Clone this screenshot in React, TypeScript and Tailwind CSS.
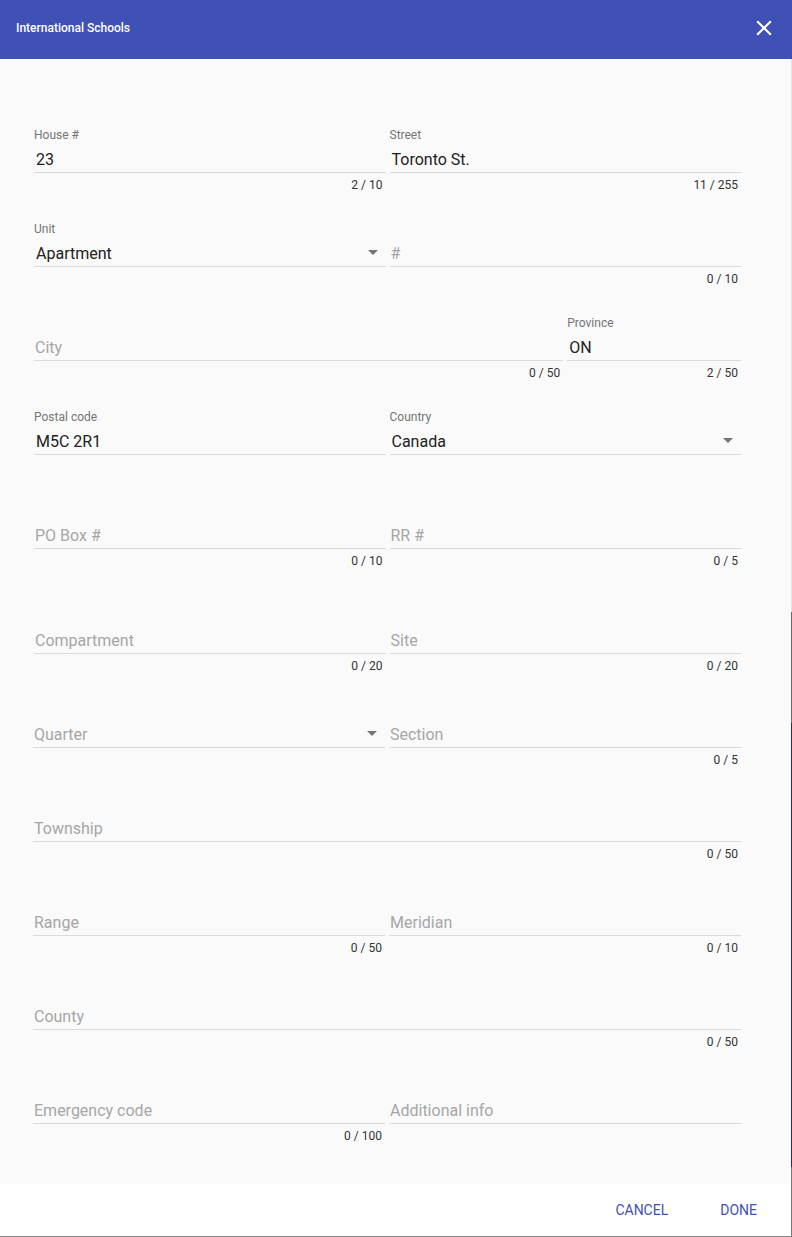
import React from "react";
import cn from "clsx";

interface FieldProps {
  label?: string;
  value?: string;
  placeholder?: string;
  counter?: string;
  select?: boolean;
  className?: string;
}

const fontStack = "font-['Roboto','Liberation_Sans',sans-serif]";

const DropArrow: React.FC = () => (
  <svg width="10" height="5" viewBox="0 0 10 5" className="mr-[8px] mb-[2px]">
    <polygon points="0,0 10,0 5,5" fill="#757575" />
  </svg>
);

const Field: React.FC<FieldProps> = ({
  label,
  value,
  placeholder,
  counter,
  select,
  className,
}) => (
  <div className={cn("flex flex-col", className)}>
    <div className="h-4 text-xs leading-4 text-[#757575]">{label}</div>
    <div
      className={cn(
        "flex h-[30px] items-center justify-between pt-[4px]",
        "border-b border-[#dadada]"
      )}
    >
      {value ? (
        <span className="pl-[2px] text-base text-[#212121]">{value}</span>
      ) : (
        <span className="pl-[1px] text-base text-[#a6a6a6]">{placeholder}</span>
      )}
      {select && <DropArrow />}
    </div>
    <div className="mt-[2px] h-5 pr-[3px] text-right text-xs leading-5 text-[#333]">
      {counter}
    </div>
  </div>
);

const rowCn = "grid grid-cols-2 gap-x-[4px]";

export default function App() {
  return (
    <div className={cn("flex w-[792px] bg-[#2a2f4a]", fontStack)}>
      <div className="flex w-[791px] flex-col">
        <header
          className={cn(
            "flex h-[59px] items-center justify-between",
            "bg-[#3f51b5] pb-[4px] pl-4 pr-[14px] text-white"
          )}
        >
          <span className="text-xs font-medium">International Schools</span>
          <svg width="26" height="26" viewBox="0 0 24 24" fill="white">
            <path d="M19 6.41L17.59 5 12 10.59 6.41 5 5 6.41 10.59 12 5 17.59 6.41 19 12 13.41 17.59 19 19 17.59 13.41 12z" />
          </svg>
        </header>

        <main className="flex flex-col bg-[#fafafa] pt-[68px] pb-[38px] pl-[34px] pr-[50px]">
          <div className={rowCn}>
            <Field label="House #" value="23" counter="2 / 10" />
            <Field label="Street" value="Toronto St." counter="11 / 255" />
          </div>

          <div className={cn(rowCn, "mt-[26px]")}>
            <Field label="Unit" value="Apartment" select />
            <Field placeholder="#" counter="0 / 10" />
          </div>

          <div className="mt-[26px] grid grid-cols-4 gap-x-[4px]">
            <Field placeholder="City" counter="0 / 50" className="col-span-3" />
            <Field label="Province" value="ON" counter="2 / 50" />
          </div>

          <div className={cn(rowCn, "mt-[26px]")}>
            <Field label="Postal code" value="M5C 2R1" />
            <Field label="Country" value="Canada" select />
          </div>

          <div className={cn(rowCn, "mt-[26px]")}>
            <Field placeholder="PO Box #" counter="0 / 10" />
            <Field placeholder="RR #" counter="0 / 5" />
          </div>

          <div className={cn(rowCn, "mt-[37px]")}>
            <Field placeholder="Compartment" counter="0 / 20" />
            <Field placeholder="Site" counter="0 / 20" />
          </div>

          <div className={cn(rowCn, "mt-[26px] -ml-px")}>
            <Field placeholder="Quarter" select />
            <Field placeholder="Section" counter="0 / 5" />
          </div>

          <div className="mt-[26px] -ml-px">
            <Field placeholder="Township" counter="0 / 50" />
          </div>

          <div className={cn(rowCn, "mt-[26px] -ml-px")}>
            <Field placeholder="Range" counter="0 / 50" />
            <Field placeholder="Meridian" counter="0 / 10" />
          </div>

          <div className="mt-[26px] -ml-px">
            <Field placeholder="County" counter="0 / 50" />
          </div>

          <div className={cn(rowCn, "mt-[26px] -ml-px")}>
            <Field placeholder="Emergency code" counter="0 / 100" />
            <Field placeholder="Additional info" />
          </div>
        </main>

        <footer
          className={cn(
            "flex h-[53px] items-center justify-end gap-[36px]",
            "border-b border-[#8a8a8a] bg-white pr-[26px]",
            "text-sm font-normal uppercase text-[#3f51b5]"
          )}
        >
          <button className="px-2 py-2 uppercase">Cancel</button>
          <button className="px-2 py-2 uppercase">Done</button>
        </footer>
      </div>

      <div className="flex w-px flex-col">
        <div className="h-[59px] bg-[#3f51b5]" />
        <div className="h-[553px] bg-[#e4e4e4]" />
        <div className="h-[111px] bg-[#6b6b6b]" />
        <div className="flex-1 bg-[#2a2f4a]" />
        <div className="h-[70px] bg-[#7a7a7a]" />
      </div>
    </div>
  );
}
